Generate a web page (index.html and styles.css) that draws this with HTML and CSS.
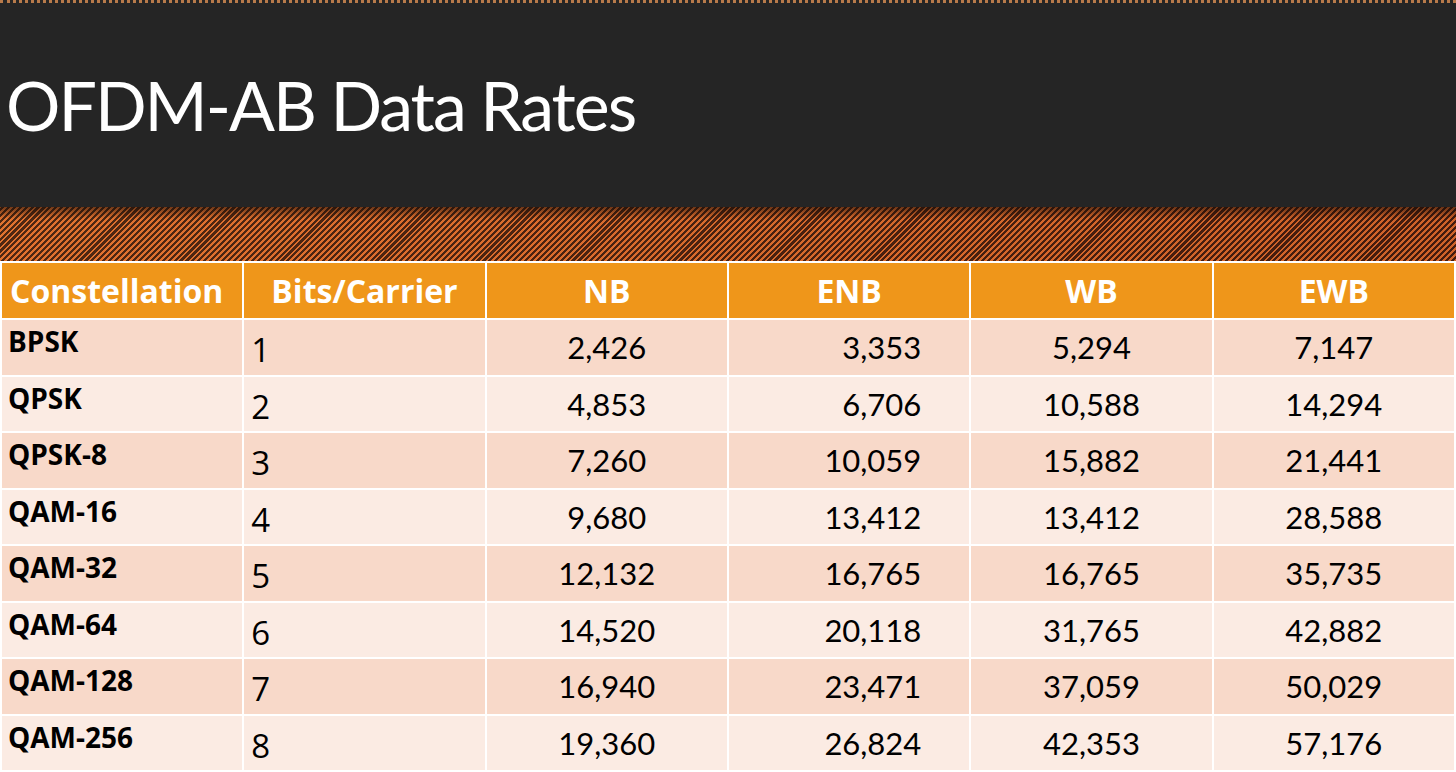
FILE: index.html
```html
<!DOCTYPE html>
<html>
<head>
<meta charset="utf-8">
<link rel="stylesheet" href="styles.css">
</head>
<body>
<div class="slide">
  <header class="title-bar">
    <h1 class="title">OFDM-AB Data Rates</h1>
  </header>
  <div class="band"></div>
  <table class="rates">
    <thead>
      <tr>
        <th class="c-name">Constellation</th>
        <th>Bits/Carrier</th>
        <th>NB</th>
        <th>ENB</th>
        <th>WB</th>
        <th>EWB</th>
      </tr>
    </thead>
    <tbody>
      <tr><td class="c-name">BPSK</td><td class="c-bits">1</td><td class="c-nb">2,426</td><td class="c-enb">3,353</td><td class="c-wb">5,294</td><td class="c-ewb">7,147</td></tr>
      <tr><td class="c-name">QPSK</td><td class="c-bits">2</td><td class="c-nb">4,853</td><td class="c-enb">6,706</td><td class="c-wb">10,588</td><td class="c-ewb">14,294</td></tr>
      <tr><td class="c-name">QPSK-8</td><td class="c-bits">3</td><td class="c-nb">7,260</td><td class="c-enb">10,059</td><td class="c-wb">15,882</td><td class="c-ewb">21,441</td></tr>
      <tr><td class="c-name">QAM-16</td><td class="c-bits">4</td><td class="c-nb">9,680</td><td class="c-enb">13,412</td><td class="c-wb">13,412</td><td class="c-ewb">28,588</td></tr>
      <tr><td class="c-name">QAM-32</td><td class="c-bits">5</td><td class="c-nb">12,132</td><td class="c-enb">16,765</td><td class="c-wb">16,765</td><td class="c-ewb">35,735</td></tr>
      <tr><td class="c-name">QAM-64</td><td class="c-bits">6</td><td class="c-nb">14,520</td><td class="c-enb">20,118</td><td class="c-wb">31,765</td><td class="c-ewb">42,882</td></tr>
      <tr><td class="c-name">QAM-128</td><td class="c-bits">7</td><td class="c-nb">16,940</td><td class="c-enb">23,471</td><td class="c-wb">37,059</td><td class="c-ewb">50,029</td></tr>
      <tr><td class="c-name">QAM-256</td><td class="c-bits">8</td><td class="c-nb">19,360</td><td class="c-enb">26,824</td><td class="c-wb">42,353</td><td class="c-ewb">57,176</td></tr>
    </tbody>
  </table>
</div>
</body>
</html>
```

FILE: styles.css
```css
html, body {
  margin: 0;
  padding: 0;
  background: #ffffff;
}

.slide {
  width: 1456px;
  height: 772px;
  overflow: hidden;
  display: flex;
  flex-direction: column;
  background: #fbece5;
}

.title-bar {
  flex: 0 0 auto;
  height: 204px;
  background: #252525;
  border-top: 3px dotted #b87a4a;
  display: flex;
  align-items: center;
  padding-left: 6px;
}

.title {
  margin: 0;
  margin-top: -2px;
  font-family: "Lato", "Open Sans", sans-serif;
  font-weight: 400;
  font-size: 68px;
  letter-spacing: -2px;
  color: #ffffff;
}

.band {
  flex: 0 0 auto;
  height: 54px;
  background:
    linear-gradient(180deg, rgba(20,10,5,0.55) 0px, rgba(20,10,5,0) 12px),
    linear-gradient(90deg, rgba(255,140,40,0.10) 0%, rgba(120,20,0,0.15) 100%),
    repeating-linear-gradient(-45deg, #dd6f30 0px, #dd6f30 2px, #3a1c10 2px, #3a1c10 4.2px);
}

.rates {
  flex: 0 0 auto;
  width: 1456px;
  border-collapse: collapse;
  table-layout: fixed;
  font-family: "Lato", "Open Sans", sans-serif;
}

.rates th, .rates td {
  border: 2px solid #ffffff;
  padding: 0;
}

.rates thead tr {
  height: 57px;
}

.rates tbody tr {
  height: 56.5px;
}

.rates th {
  background: #ef961a;
  color: #ffffff;
  font-family: "Open Sans", sans-serif;
  font-weight: 700;
  font-size: 32px;
  text-align: center;
  vertical-align: middle;
}

.rates th.c-name {
  text-align: left;
  padding-left: 8px;
}

.rates td {
  color: #000000;
  font-size: 31px;
  line-height: 36px;
}

.rates tbody tr:nth-child(odd) td {
  background: #f8d9c9;
}

.rates tbody tr:nth-child(even) td {
  background: #fbebe3;
}

.rates td.c-name {
  font-family: "Open Sans", sans-serif;
  font-weight: 700;
  font-size: 28px;
  vertical-align: top;
  padding: 3px 0 0 6px;
}

.rates td.c-bits {
  font-family: "Open Sans", sans-serif;
  font-size: 33px;
  line-height: 40px;
  vertical-align: top;
  padding: 10px 0 0 7px;
}

.rates td.c-nb,
.rates td.c-wb,
.rates td.c-ewb {
  text-align: center;
  vertical-align: top;
  padding-top: 9px;
}

.rates td.c-enb {
  text-align: right;
  vertical-align: top;
  padding-top: 9px;
  padding-right: 48px;
}
```
